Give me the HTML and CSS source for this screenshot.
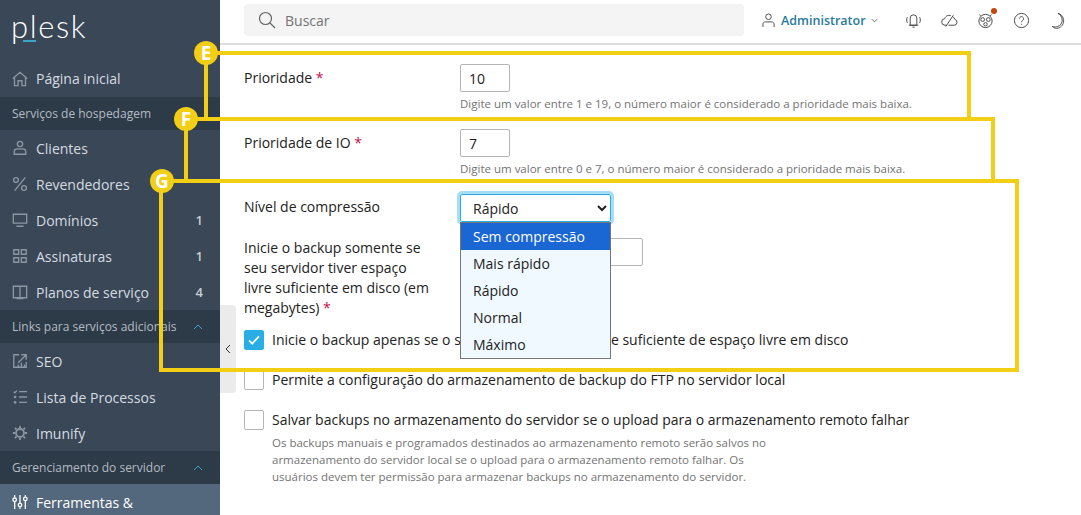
FILE: index.html
```html
<!DOCTYPE html>
<html lang="pt-BR">
<head>
<meta charset="utf-8">
<title>Plesk</title>
<link rel="stylesheet" href="styles.css">
</head>
<body>
<div class="app">
  <aside class="sidebar">
    <div class="logo"><span class="logo-text">plesk</span><span class="logo-bar"></span></div>
    <a class="item item-home"><svg class="ico" viewBox="0 0 18 18"><path d="M1 8.5 9 1.5l8 7M2.8 7.5V16.5h4V11h4.400v5.500h4V7.500"/></svg><span>Página inicial</span></a>
    <div class="section"><span>Serviços de hospedagem</span></div>
    <a class="item"><svg class="ico" viewBox="0 0 18 18"><circle cx="9" cy="4.500" r="3"/><path d="M2.500 16v-3c0-2 2-3 3.500-3h6c1.500 0 3.500 1 3.500 3v3z"/></svg><span>Clientes</span></a>
    <a class="item"><svg class="ico" viewBox="0 0 18 18"><circle cx="4.500" cy="4.500" r="2.700"/><circle cx="13.500" cy="13.500" r="2.700"/><path d="M15 1.500 3 16.500"/></svg><span>Revendedores</span></a>
    <a class="item"><svg class="ico" viewBox="0 0 18 18"><path d="M1.500 2.500h15v10h-15zM5 16h8"/></svg><span>Domínios</span><b>1</b></a>
    <a class="item"><svg class="ico" viewBox="0 0 18 18"><path d="M2 2h5.500v5H2zM10.500 2H16v5h-5.500zM2 11h5.500v5H2zM10.500 11H16v5h-5.500z"/></svg><span>Assinaturas</span><b>1</b></a>
    <a class="item"><svg class="ico" viewBox="0 0 18 18"><path d="M1.500 2.500h15v13h-15zM9 2.500v13M6 15.500v1h6v-1"/></svg><span>Planos de serviço</span><b>4</b></a>
    <div class="section"><span>Links para serviços adicionais</span><svg class="caret" viewBox="0 0 10 6"><path d="M1 5 5 1l4 4"/></svg></div>
    <a class="item"><svg class="ico" viewBox="0 0 18 18"><path d="M8 2H2v14h14v-6M7 11l8.500-8.500M10.500 2H16v5.500M7 16v-3M10.500 16v-5M14 16v-3"/></svg><span>SEO</span></a>
    <a class="item"><svg class="ico" viewBox="0 0 18 18"><path d="M8 3h9M8 9h9M8 15h9M2 3l1.200 1.200L5.500 1.800"/><circle class="fill" cx="3.500" cy="9" r="1.500"/><circle class="fill" cx="3.500" cy="15" r="1.500"/></svg><span>Lista de Processos</span></a>
    <a class="item"><svg class="ico ico-gear" viewBox="0 0 18 18"><circle cx="9" cy="9" r="4.500"/><path d="M9 1v2.500M9 14.500V17M1 9h2.500M14.500 9H17M3.300 3.300 5 5M13 13l1.700 1.700M3.300 14.700 5 13M13 5l1.700-1.700"/></svg><span>Imunify</span></a>
    <div class="section"><span>Gerenciamento do servidor</span><svg class="caret" viewBox="0 0 10 6"><path d="M1 5 5 1l4 4"/></svg></div>
    <a class="item item-active"><svg class="ico" viewBox="0 0 18 18"><path d="M3 1v3M3 9v8M9 1v9M9 15v2M15 1v2M15 8v9"/><circle cx="3" cy="6.500" r="2"/><circle cx="9" cy="12.500" r="2"/><circle cx="15" cy="5.500" r="2"/></svg><span>Ferramentas &amp;</span></a>
  </aside>
  <div class="main">
    <header class="topbar">
      <div class="search"><svg class="search-ico" viewBox="0 0 18 18"><circle cx="7.500" cy="7.500" r="6"/><path d="m12 12 5 5"/></svg><span>Buscar</span></div>
      <div class="user"><svg class="top-ico-sm" viewBox="0 0 14 16"><circle cx="7" cy="4" r="3"/><path d="M1 15v-3c0-1.500 1.200-2.500 2.500-2.500h7c1.300 0 2.500 1 2.500 2.500v3"/></svg><span class="user-name">Administrator</span><svg class="user-caret" viewBox="0 0 8 5"><path d="m1 1 3 3 3-3"/></svg></div>
      <div class="actions">
        <svg class="top-ico" viewBox="0 0 18 18"><path d="M5.500 14V6.500a3.500 3.500 0 0 1 7 0V14zM4 14h10M2.500 5.500C1.500 7.500 1.500 9.500 2.500 11.500M15.500 5.500c1 2 1 4 0 6M7.800 16h2.400"/></svg>
        <svg class="top-ico" viewBox="0 0 18 18"><path d="M6 14H4.500a3.500 3.500 0 0 1-.5-7C5 4 8 2.800 10.500 4M8 14h6a3.200 3.200 0 0 0 .5-6.300C14.200 6.500 13.500 5.500 12.500 5M5 15.500 13 3.500"/></svg>
        <span class="badge-wrap"><svg class="top-ico" viewBox="0 0 18 18"><circle cx="9" cy="9.500" r="7"/><circle cx="6" cy="8" r="2"/><circle cx="12" cy="8" r="2"/><circle cx="9" cy="13" r="1.800"/><path d="M4 4 2.500 2.800M14 4l1.500-1.200"/></svg><i class="badge"></i></span>
        <svg class="top-ico" viewBox="0 0 18 18"><circle cx="9" cy="9" r="7.500"/><path d="M6.800 7a2.200 2.200 0 1 1 3.300 2c-.8.500-1.100.9-1.100 1.800M9 12.500v1"/></svg>
        <svg class="top-ico" viewBox="0 0 18 18"><path d="M9.500 1.500c2 1 4.500 3.500 4.500 7a7.500 7.500 0 0 1-10.500 6.800c1.500 1.500 3 2 4.500 2 4 0 7.500-3.500 7.500-8 0-4-3-7.500-6-7.800z"/></svg>
      </div>
    </header>
    <form class="form">
      <div class="row row-e">
        <label class="lab">Prioridade <em>*</em></label>
        <div class="field"><input class="num" type="text" value="10"><p class="hint">Digite um valor entre 1 e 19, o número maior é considerado a prioridade mais baixa.</p></div>
      </div>
      <div class="row row-f">
        <label class="lab">Prioridade de IO <em>*</em></label>
        <div class="field"><input class="num" type="text" value="7"><p class="hint">Digite um valor entre 0 e 7, o número maior é considerado a prioridade mais baixa.</p></div>
      </div>
      <div class="row row-g">
        <label class="lab lab-sel">Nível de compressão</label>
        <div class="field select-wrap">
          <select class="sel"><option>Rápido</option></select>
          <ul class="dropdown">
            <li class="on">Sem compressão</li>
            <li>Mais rápido</li>
            <li>Rápido</li>
            <li>Normal</li>
            <li>Máximo</li>
          </ul>
        </div>
      </div>
      <div class="row row-h">
        <label class="lab">Inicie o backup somente se seu servidor tiver espaço livre suficiente em disco (em megabytes) <em>*</em></label>
        <div class="field"><input class="wide" type="text"></div>
      </div>
      <div class="check check-1"><span class="box box-on"><svg viewBox="0 0 20 20"><path d="m4.500 10.500 3.500 3.500 7.500-8"/></svg></span><span>Inicie o backup apenas se o servidor tiver quantidade suficiente de espaço livre em disco</span></div>
      <div class="check check-2"><span class="box"></span><span>Permite a configuração do armazenamento de backup do FTP no servidor local</span></div>
      <div class="check check-3"><span class="box"></span><span>Salvar backups no armazenamento do servidor se o upload para o armazenamento remoto falhar</span></div>
      <p class="note">Os backups manuais e programados destinados ao armazenamento remoto serão salvos no armazenamento do servidor local se o upload para o armazenamento remoto falhar. Os usuários devem ter permissão para armazenar backups no armazenamento do servidor.</p>
    </form>
  </div>
  <div class="handle"><svg viewBox="0 0 6 10"><path d="M5 1 1 5l4 4"/></svg></div>
  <div class="mark mark-e"><i class="pin">E</i></div>
  <div class="mark mark-f"><i class="pin">F</i></div>
  <div class="mark mark-g"><i class="pin">G</i></div>
</div>
</body>
</html>
```
FILE: styles.css
```css
* { box-sizing: border-box; }
html, body { margin: 0; height: 515px; overflow: hidden; background: #fff; }
body { font-family: "Open Sans", "Liberation Sans", sans-serif; font-size: 14px; color: #222; }
.app { position: relative; display: flex; width: 1081px; height: 515px; overflow: hidden; }

.sidebar { width: 220px; flex: none; height: 515px; background: #394757; color: #d6dbe0; display: flex; flex-direction: column; overflow: hidden; }
.logo { height: 60px; flex: none; position: relative; padding: 6px 0 0 11px; }
.logo-text { font-family: Lato, "Open Sans", sans-serif; font-weight: 300; font-size: 31px; line-height: 40px; letter-spacing: 1.6px; color: #fff; }
.logo-bar { position: absolute; left: 23px; top: 40px; width: 13px; height: 2px; background: #3da6c8; }
.item { display: flex; align-items: center; height: 36px; flex: none; padding: 0 17px 0 12px; color: #d6dbe0; }
.item span { flex: 1; margin-left: 8px; }
.item b { font-weight: 600; font-size: 13px; color: #c6ccd3; }
.item-home { height: 37px; }
.item-active { background: #53687c; color: #fff; height: 36px; }
.ico { width: 16px; height: 16px; flex: none; fill: none; stroke: #8c97a3; stroke-width: 1.500; }
.ico .fill { fill: #8c97a3; stroke: none; }
.ico-gear { stroke-width: 2; }
.item-active .ico { stroke: #fff; }
.section { height: 33px; flex: none; background: #2d3a47; display: flex; align-items: center; justify-content: space-between; padding: 0 17px 0 12px; font-size: 12px; color: #b3bbc4; }
.section span { white-space: nowrap; }
.caret { width: 10px; height: 6px; fill: none; stroke: #3da6d0; stroke-width: 1; margin-right: 0; }

.main { flex: 1; min-width: 0; }
.topbar { height: 45px; display: flex; align-items: center; border-bottom: 2px solid #dedede; padding: 0 0 3px 24px; }
.search { width: 500px; height: 32px; background: #f4f4f4; border-radius: 4px; display: flex; align-items: center; padding-left: 14px; color: #737373; }
.search span { margin-left: 9px; }
.search-ico { width: 18px; height: 18px; fill: none; stroke: #666; stroke-width: 1.200; }
.user { display: flex; align-items: center; margin-left: 18px; }
.top-ico-sm { width: 13px; height: 15px; fill: none; stroke: #444; stroke-width: 1; }
.user-name { margin-left: 6px; font-size: 12.500px; font-weight: 600; color: #28799c; }
.user-caret { width: 7px; height: 5px; margin-left: 5px; fill: none; stroke: #555; stroke-width: 1; }
.actions { display: flex; align-items: center; gap: 19px; margin-left: 27px; }
.top-ico { width: 17px; height: 17px; display: block; fill: none; stroke: #444; stroke-width: 1; }
.badge-wrap { position: relative; display: block; }
.badge { position: absolute; right: -3px; top: -4px; width: 6px; height: 6px; border-radius: 50%; background: #c8440f; }

.form { padding: 19px 0 0 24px; }
.row { display: flex; }
.lab { width: 216px; flex: none; line-height: 20px; color: #222; padding-right: 24px; padding-top: 4px; }
.lab em { color: #c0114d; font-style: normal; }
.field { flex: none; }
.num { display: block; width: 50px; height: 28px; border: 1px solid #b5b5b5; border-radius: 2px; padding: 0 8px; font: 14px "Open Sans", sans-serif; color: #222; }
.hint { margin: 3px 0 0; font-size: 11.500px; line-height: 18px; color: #737373; }
.row-f { margin-top: 16px; }
.row-g { margin-top: 16px; }
.lab-sel { padding-top: 3px; }
.select-wrap { position: relative; }
.sel { display: block; width: 151px; height: 28px; border: 1px solid #28aee4; border-radius: 2px; outline: 3px solid #a8ddf3; padding: 0 8px; background: #fff; font: 14px "Open Sans", sans-serif; color: #222; }
.dropdown { position: absolute; left: 0; top: 28px; width: 151px; margin: 0; padding: 0; list-style: none; background: #f0f9ff; border: 1px solid #767676; z-index: 2; }
.dropdown li { height: 27px; line-height: 27px; padding-left: 12px; white-space: nowrap; }
.dropdown .on { background: #1a66d2; color: #fff; }
.row-h { margin-top: 16px; }
.wide { display: block; width: 183px; height: 28px; border: 1px solid #b5b5b5; border-radius: 2px; }
.row-h .lab { padding-top: 0; padding-right: 30px; }
.check { display: flex; align-items: center; gap: 8px; height: 20px; line-height: 20px; }
.check-1 { margin-top: 12px; }
.check-2, .check-3 { margin-top: 20px; }
.box { width: 20px; height: 20px; flex: none; border: 1px solid #b5b5b5; border-radius: 2px; background: #fff; }
.box-on { background: #28aee4; border-color: #28aee4; }
.box svg { display: block; width: 18px; height: 18px; fill: none; stroke: #fff; stroke-width: 2; }
.note { margin: 4px 0 0 28px; width: 510px; font-size: 11.500px; line-height: 17px; color: #737373; }

.handle { position: absolute; left: 220px; top: 305px; width: 16px; height: 88px; background: #ebebeb; border-radius: 0 4px 4px 0; display: flex; align-items: center; justify-content: center; }
.handle svg { width: 6px; height: 10px; fill: none; stroke: #333; stroke-width: 1; }
.mark { position: absolute; border: 4px solid #f2ce14; }
.mark-e { left: 204px; top: 51px; width: 767px; height: 70px; }
.mark-f { left: 184px; top: 117px; width: 811px; height: 66px; }
.mark-g { left: 159px; top: 179px; width: 860px; height: 193px; }
.pin { position: absolute; width: 24px; height: 24px; border-radius: 50%; background: #f2ce14; color: #fff; font: 700 19px/24px "Open Sans", sans-serif; text-align: center; }
.mark-e .pin { left: -14px; top: -14px; }
.mark-f .pin { left: -14px; top: -14px; }
.mark-g .pin { left: -13px; top: -14px; }
```
